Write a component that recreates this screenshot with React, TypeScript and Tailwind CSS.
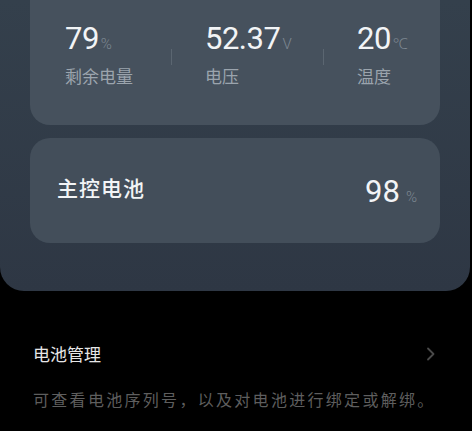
import React from "react";

const CJK = { fontFamily: '"Noto Sans CJK SC", "Noto Sans", sans-serif' };
const NUM = { fontFamily: 'Roboto, "Noto Sans", sans-serif' };

const stats = [
  { value: "79", unit: "%", label: "剩余电量" },
  { value: "52.37", unit: "V", label: "电压" },
  { value: "20", unit: "℃", label: "温度" },
];

function Stat({ value, unit, label }: { value: string; unit: string; label: string }) {
  return (
    <div className="flex flex-col">
      <div className="flex items-baseline" style={NUM}>
        <span className="text-[31px] leading-[36px] tracking-[-0.5px] text-[#f2f4f6]">{value}</span>
        <span className="ml-[2px] text-[15px] font-light text-[#7e8892]">{unit}</span>
      </div>
      <span className="mt-[8px] text-[17px] leading-[22px] text-[#9ba4ad]" style={CJK}>
        {label}
      </span>
    </div>
  );
}

function Divider() {
  return <div className="mt-[28px] h-[16px] w-px bg-[#5b6671]" />;
}

export default function App() {
  return (
    <div className="h-[431px] w-[472px] overflow-hidden bg-black" style={CJK}>
      <div className="w-[470px] rounded-b-[24px] bg-gradient-to-b from-[#34404c] to-[#2e3744] px-[30px] pb-[48px]">
        <div className="flex h-[125px] rounded-b-[20px] bg-[#46515d] pl-[35px] pt-[21px]">
          <div className="w-[106px]">
            <Stat {...stats[0]} />
          </div>
          <Divider />
          <div className="ml-[33px] w-[118px]">
            <Stat {...stats[1]} />
          </div>
          <Divider />
          <div className="ml-[33px]">
            <Stat {...stats[2]} />
          </div>
        </div>

        <div className="mt-[13px] flex h-[105px] items-center justify-between rounded-[20px] bg-[#434e5a] pl-[27px] pr-[23px]">
          <span className="mb-[5px] text-[21px] font-medium tracking-[1px] text-[#f2f4f6]">主控电池</span>
          <div className="mt-[2px] flex items-baseline" style={NUM}>
            <span className="text-[31px] leading-[36px] text-[#f2f4f6]">98</span>
            <span className="ml-[6px] text-[15px] font-light text-[#7e8892]">%</span>
          </div>
        </div>
      </div>

      <div className="px-[33px] pt-[52px]">
        <div className="flex items-center justify-between">
          <span className="text-[17px] leading-[22px] text-[#e6e6e6]">电池管理</span>
          <svg width="10" height="14" viewBox="0 0 10 14" className="mr-[3px]" fill="none">
            <path d="M2 1.5 L7.5 7 L2 12.5" stroke="#4a4a4a" strokeWidth="1.8" strokeLinecap="round" strokeLinejoin="round" />
          </svg>
        </div>
        <p className="mt-[23px] text-[16px] leading-[22px] tracking-[2.3px] text-[#5e5e5e] whitespace-nowrap">
          可查看电池序列号，以及对电池进行绑定或解绑。
        </p>
      </div>
    </div>
  );
}
